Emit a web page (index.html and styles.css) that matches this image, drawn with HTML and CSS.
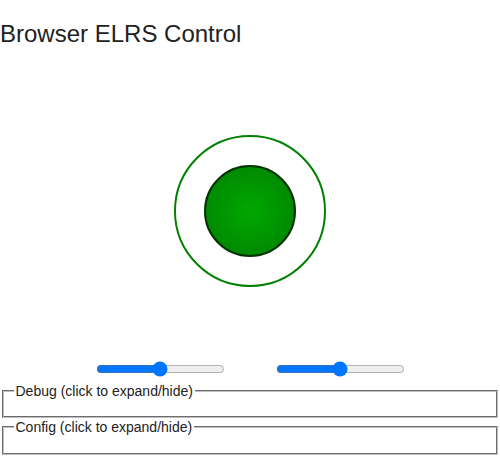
FILE: index.html
```html
<!DOCTYPE html>
<html>
<head>
<meta charset="utf-8">
<title>Browser ELRS Control</title>
<link rel="stylesheet" href="styles.css">
</head>
<body>
<h2 class="title">Browser ELRS Control</h2>
<div class="stick-area">
  <svg class="stick" width="160" height="160" viewBox="0 0 160 160">
    <defs>
      <radialGradient id="knob" cx="50%" cy="50%" r="50%">
        <stop offset="0%" stop-color="#00a800"/>
        <stop offset="100%" stop-color="#008a00"/>
      </radialGradient>
    </defs>
    <circle cx="80" cy="80" r="75" fill="none" stroke="#008000" stroke-width="2"/>
    <circle cx="80" cy="80" r="45" fill="url(#knob)" stroke="#003300" stroke-width="2"/>
  </svg>
</div>
<div class="sliders">
  <input type="range" class="slider" min="0" max="100" value="50">
  <input type="range" class="slider" min="0" max="100" value="50">
</div>
<fieldset class="panel">
  <legend>Debug (click to expand/hide)</legend>
</fieldset>
<fieldset class="panel">
  <legend>Config (click to expand/hide)</legend>
</fieldset>
</body>
</html>
```
FILE: styles.css
```css
html, body {
  margin: 0;
  padding: 0;
  background: #ffffff;
  font-family: "Liberation Sans", Arial, sans-serif;
  color: #222222;
}
.title {
  font-size: 24px;
  font-weight: normal;
  margin: 20px 0 20px 0;
  line-height: 28px;
}
.stick-area {
  height: 285px;
  display: flex;
  align-items: center;
  justify-content: center;
}
.stick {
  display: block;
}
.sliders {
  display: flex;
  justify-content: center;
  gap: 47px;
  margin-top: 6px;
  margin-bottom: 4px;
}
.slider {
  width: 129px;
  margin: 2px;
}
.panel {
  font-size: 14px;
  margin: 0 2px 1px 2px;
  border: 2px groove #c0c0c0;
  padding: 4.9px 9.5px 12.5px;
}
.panel legend {
  padding: 0 2px;
  color: #222222;
}
```
